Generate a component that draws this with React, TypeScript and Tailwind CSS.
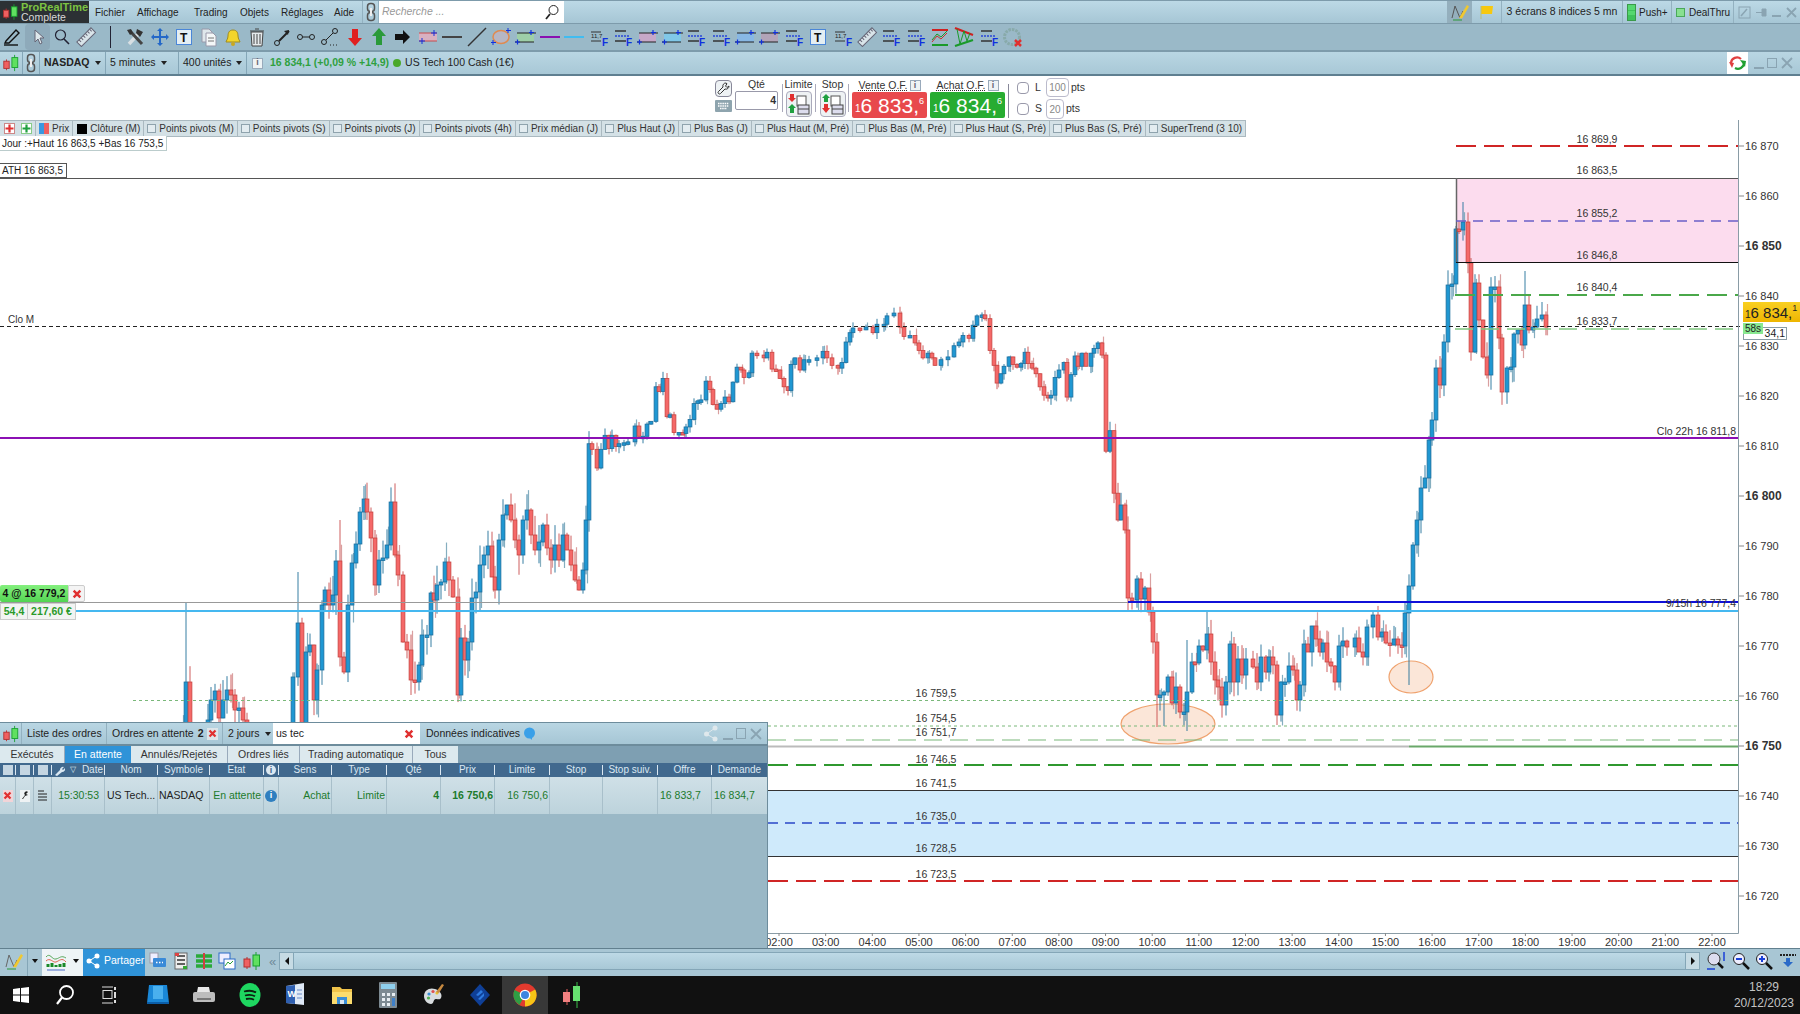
import React from "react";

type P = [number, number];
const early: P[] = [[182,735],[186,682],[190,745],[208,720],[211,700],[215,691],[219,718],[223,700],[227,690],[231,695],[235,710],[239,708],[243,720],[247,750],
[290,750],[293,677],[298,623],[302,750],[306,652],[310,645],[314,700],[317,670],[322,605],[325,590],[329,605],[333,595],[336,561],[340,657],[344,672],[348,605],[352,563],[356,544],[360,512],[364,499],[367,512],[371,538],[375,585],[379,560],[383,558],[387,545],[391,502],[395,555],[398,575],[403,642],[407,650],[411,680],[415,682],[419,665],[422,635],[427,635],[431,593],[434,600],[437,585],[441,582],[445,562],[449,580],[453,597],[458,695],[461,638],[465,660],[468,642],[472,598],[476,592],[480,565],[484,555],[488,546],[492,577],[495,590],[499,540],[503,515],[507,505],[511,520],[515,540],[519,555],[523,520],[527,510],[531,535],[535,550],[539,542],[543,525],[547,548],[551,560],[555,545],[559,560],[563,535],[567,550],[571,565],[575,580],[579,590],[583,570],[586,520]];
const midRaw: P[] = [[589,454],[592,460],[597,480],[601,460],[605,445],[609,459],[612,445],[616,457],[619,454],[624,453],[628,452],[635,435],[639,446],[643,446],[647,433],[651,430],[656,393],[659,398],[663,384],[667,425],[670,423],[674,442],[679,442],[683,443],[686,436],[690,428],[694,411],[698,408],[701,407],[706,387],[710,396],[713,412],[717,417],[721,411],[725,404],[729,409],[733,388],[737,372],[741,375],[744,383],[749,378],[752,357],[757,359],[764,362],[767,356],[772,374],[776,375],[780,384],[784,393],[788,397],[791,369],[795,362],[800,375],[804,364],[809,364],[817,362],[823,355],[827,362],[832,370],[838,373],[842,367],[846,345],[850,335],[853,330],[860,332],[866,329],[873,335],[877,326],[884,326],[887,317],[894,314],[900,329],[904,339],[910,338],[915,346],[919,354],[923,362],[928,357],[932,362],[935,370],[941,364],[948,361],[954,349],[959,345],[963,338],[969,341],[973,327],[977,317],[982,316],[985,320],[990,354],[994,370],[997,389],[1001,379],[1004,371],[1009,361],[1013,369],[1017,372],[1021,368],[1025,356],[1028,368],[1032,373],[1036,379],[1040,393],[1044,402],[1048,405],[1051,402],[1055,383],[1059,375],[1064,367],[1067,404],[1071,380],[1075,360],[1078,371],[1082,357],[1086,371],[1091,357],[1094,352],[1098,346],[1102,359],[1106,462],[1110,440],[1114,507]];
const late: P[] = [[1118,520],[1121,505],[1125,530],[1128,598],[1132,600],[1137,579],[1141,599],[1145,588],[1149,612],[1153,642],[1157,695],[1160,695],[1164,692],[1168,677],[1172,703],[1176,687],[1180,712],[1184,712],[1187,692],[1192,662],[1195,663],[1199,646],[1203,650],[1207,634],[1211,662],[1215,680],[1218,687],[1222,705],[1226,682],[1230,644],[1234,682],[1238,659],[1242,675],[1246,659],[1253,667],[1257,682],[1261,657],[1266,672],[1269,657],[1273,665],[1277,715],[1281,682],[1285,682],[1289,666],[1293,670],[1297,700],[1300,685],[1304,644],[1308,652],[1312,626],[1316,639],[1320,652],[1323,643],[1327,662],[1331,666],[1335,682],[1339,646],[1343,641],[1347,647],[1355,638],[1359,652],[1363,657],[1367,627],[1373,615],[1378,637],[1382,632],[1386,643],[1390,645],[1394,639],[1398,645],[1402,646],[1405,613],[1409,586],[1413,545],[1417,520],[1421,488],[1425,478],[1429,440],[1432,420],[1436,368],[1440,385],[1444,342],[1448,285],[1452,284],[1456,229],[1459,230],[1463,222],[1468,263],[1471,352],[1475,283],[1479,320],[1483,357],[1487,375],[1491,287],[1495,287],[1499,338],[1502,392],[1507,368],[1511,367],[1514,334],[1518,330],[1522,345],[1525,305],[1529,330],[1533,327],[1537,319],[1542,315],[1546,327]];
const pts: P[] = [...early, ...midRaw.map(([x, y]): P => [x, 300 + ((y - 300) * 2.8) / 3]), ...late];
const rnd = (i: number) => {
  const s = Math.sin(i * 12.9898 + 4.1) * 43758.5453;
  return s - Math.floor(s);
};
const tops: Record<number, number> = { 186: 602, 298: 572, 340: 520, 364: 486, 1463: 202, 1525: 271, 1187: 640, 1207: 612 };
const bots: Record<number, number> = { 1409: 685, 1157: 727, 1164: 726, 1187: 731, 1277: 725, 306: 760 };
const candles = pts.map(([x, c], i) => {
  const pv = pts[i - 1];
  const o = !pv || x - pv[0] > 10 ? c + 30 : pv[1];
  const up = c <= o;
  const top = Math.min(o, c);
  const bot = Math.max(Math.max(o, c), top + 2.5);
  const amp = x < 590 ? 20 : x < 1110 ? 7 : 15;
  return { x, up, top, bot, wt: tops[x] ?? top - rnd(i) * amp, wb: bots[x] ?? bot + rnd(i + 99) * amp, ghost: i % 3 === 0, gt: top - rnd(i + 7) * amp, gb: bot + rnd(i + 31) * amp * 0.9 };
});

const py = (p: number) => 146 + (16870 - p) * 5;
const ticks = [16870, 16860, 16850, 16840, 16830, 16820, 16810, 16800, 16790, 16780, 16770, 16760, 16750, 16740, 16730, 16720];
const hours = Array.from({ length: 21 }, (_, i) => i + 2);
const levels: [string, number][] = [["16 869,9", 139], ["16 863,5", 170.5], ["16 855,2", 213.5], ["16 846,8", 255], ["16 840,4", 287.5], ["16 833,7", 321.5], ["16 759,5", 693], ["16 754,5", 718.5], ["16 751,7", 732], ["16 746,5", 759], ["16 741,5", 783], ["16 735,0", 816], ["16 728,5", 848], ["16 723,5", 874]];

const Ic = ({ children, w = 22, h = 20 }: { children: React.ReactNode; w?: number; h?: number }) => (
  <svg width={w} height={h} viewBox={`0 0 ${w} ${h}`} className="shrink-0">{children}</svg>
);
const Fl = () => (
  <Ic>
    <path d="M3 4h11M3 14h11" stroke="#333" strokeWidth="1.3" />
    <path d="M3 9h14" stroke="#2a47d8" strokeDasharray="2 1" strokeWidth="1.3" />
    <text x="14" y="19" fontSize="10" fontWeight="700" fill="#1030e0">F</text>
  </Ic>
);
const Rc = ({ c }: { c: string }) => (
  <Ic>
    <rect x="3" y="6" width="17" height="9" fill={c} />
    <path d="M3 6h19M1 15h19" stroke="#222" />
    <path d="M17 3v5M15 5.500h5M1 15h5M3.500 12.500v5" stroke="#1030e0" strokeWidth="1.200" />
  </Ic>
);
const Sm = () => (
  <Ic>
    <path d="M3 5h10M3 14h10" stroke="#333" />
    <text x="3" y="11" fontSize="6" fill="#222">11,7</text>
    <text x="14" y="19" fontSize="10" fontWeight="700" fill="#1030e0">F</text>
  </Ic>
);
const Ruler = () => (
  <Ic>
    <g transform="rotate(-45 11 10)">
      <rect x="1" y="7" width="20" height="6.500" fill="#d9e4e9" stroke="#667" />
      <path d="M4 7v3M7 7v3M10 7v3M13 7v3M16 7v3M19 7v3" stroke="#667" />
    </g>
  </Ic>
);
const Tb = () => (
  <Ic>
    <rect x="3.500" y="2.500" width="15" height="15" fill="#e4eef3" stroke="#4a86d8" />
    <text x="7" y="14.500" fontSize="12" fontWeight="700" fill="#111">T</text>
  </Ic>
);
const LineI = ({ c }: { c: string }) => (
  <Ic>
    <path d="M1 10h20" stroke={c} strokeWidth="2" />
  </Ic>
);
const tools: React.ReactNode[] = [
  <Ic key="a"><path d="M5 17 15 6" stroke="#d8dfe3" strokeWidth="3.500" /><path d="M6 4l12 13" stroke="#444" strokeWidth="3" /><path d="M13 2l6 3-3 5-4-4zM3 3l4-1 2 4-3 2z" fill="#333" /></Ic>,
  <Ic key="b"><path d="M11 2v16M3 10h16" stroke="#2468c8" strokeWidth="2" /><path d="M11 1l-3 3h6zM11 19l-3-3h6zM2 10l3-3v6zM20 10l-3-3v6z" fill="#2468c8" /></Ic>,
  <Tb key="c" />,
  <Ic key="d"><path d="M5 2h7l3 3v10H5z" fill="#dfe7eb" stroke="#99a" /><path d="M9 6h7l3 3v10H9z" fill="#f4f7f8" stroke="#99a" /><path d="M11 11h6M11 14h6" stroke="#777" /></Ic>,
  <Ic key="e"><path d="M11 3c-4 0-5 3-5 6 0 3-2 5-2 6h14c0-1-2-3-2-6 0-3-1-6-5-6z" fill="#f2d52c" stroke="#a08c20" /><circle cx="11" cy="17" r="2" fill="#c9a820" /></Ic>,
  <Ic key="f"><path d="M5 5h12l-1 14H6z" fill="#e6eaec" stroke="#444" /><path d="M4 4h14M9 2h4M8 7v10M11 7v10M14 7v10" stroke="#444" /></Ic>,
  <Ic key="g"><circle cx="6" cy="16" r="2.500" fill="none" stroke="#222" /><path d="M8 14 18 4" stroke="#222" strokeWidth="2" /><path d="M18 3l-5 1 4 4z" fill="#222" /></Ic>,
  <Ic key="h"><circle cx="5" cy="10" r="2.500" fill="none" stroke="#222" /><circle cx="17" cy="10" r="2.500" fill="none" stroke="#222" /><path d="M7.500 10h7" stroke="#222" /></Ic>,
  <Ic key="i"><circle cx="5" cy="15" r="2.500" fill="none" stroke="#222" /><circle cx="16" cy="4" r="2.500" fill="none" stroke="#222" /><path d="M7 13 14 6" stroke="#222" /><path d="M11 18h1M14 18h1M17 18h1" stroke="#222" /></Ic>,
  <Ic key="j"><path d="M8 2h6v9h4l-7 8-7-8h4z" fill="#e02020" /></Ic>,
  <Ic key="k"><path d="M11 1l7 8h-4v9H8V9H4z" fill="#2a9a3a" /></Ic>,
  <Ic key="l"><path d="M3 7h8V3l7 7-7 7v-4H3z" fill="#111" /></Ic>,
  <Ic key="m"><rect x="2" y="6" width="18" height="8" fill="#d8b0c0" /><path d="M2 6h18M2 14h18" stroke="#c84a4a" /><path d="M17 3v6M14 6h6M5 11v6M2 14h6" stroke="#1030e0" /></Ic>,
  <LineI key="n" c="#444" />,
  <Ic key="o"><path d="M2 19 20 1" stroke="#333" strokeWidth="1.500" /></Ic>,
  <Ic key="p"><ellipse cx="11" cy="10" rx="8" ry="6.500" fill="#b6b6c4" stroke="#e08a50" strokeWidth="1.500" /><path d="M18 1v5M16 3.500h5M3 13v5M1 15.500h5" stroke="#1030e0" /></Ic>,
  <Rc key="q" c="#9ecfa8" />,
  <LineI key="r" c="#8a10b0" />,
  <LineI key="s" c="#40bcf0" />,
  <Sm key="t" />,
  <Fl key="u" />,
  <Rc key="v" c="#c6a8c8" />,
  <Rc key="w" c="#80c8e8" />,
  <Fl key="x" />,
  <Fl key="y" />,
  <Rc key="z" c="#88b8e4" />,
  <Rc key="aa" c="#b2a4b8" />,
  <Fl key="ab" />,
  <Tb key="ac" />,
  <Sm key="ad" />,
  <Ruler key="ae" />,
  <Fl key="af" />,
  <Fl key="ag" />,
  <Ic key="ah"><path d="M3 3h16" stroke="#d02020" strokeWidth="2" /><path d="M3 18h16" stroke="#1a9a2a" strokeWidth="2" /><path d="M3 15l5-6 4 3 6-6" stroke="#c83030" fill="none" /><path d="M3 13l5-6 4 3 6-6" stroke="#1a9a2a" fill="none" /></Ic>,
  <Ic key="ai" h={22}><path d="M2 2l18 7" stroke="#d02020" strokeWidth="2.200" /><path d="M2 20l18-6" stroke="#1a9a2a" strokeWidth="2.200" /><path d="M4 3l3 15 4-13 3 10 3-8" stroke="#1a9a2a" fill="none" /></Ic>,
  <Fl key="aj" />,
  <Ic key="ak"><circle cx="10" cy="10" r="7.500" fill="none" stroke="#8aa" strokeWidth="3" strokeDasharray="2.500 1" /><path d="M13 13l6 6M19 13l-6 6" stroke="#e03030" strokeWidth="2.500" /></Ic>,
];

const Candle = ({ w = 22, h = 20 }: { w?: number; h?: number }) => (
  <svg width={w} height={h} viewBox="0 0 22 20" className="shrink-0">
    <path d="M6 6v12" stroke="#c03030" /><rect x="3" y="8" width="6" height="8" fill="#f06060" stroke="#b03030" />
    <path d="M15 1v18" stroke="#18a030" /><rect x="12" y="4" width="6.500" height="11" fill="#60e060" stroke="#18a030" />
  </svg>
);
const Link = () => (
  <svg width="12" height="20" viewBox="0 0 12 20" className="shrink-0">
    <rect x="2.500" y="1.500" width="7" height="8" rx="3" fill="none" stroke="#555" strokeWidth="1.500" />
    <rect x="2.500" y="10.500" width="7" height="8" rx="3" fill="none" stroke="#555" strokeWidth="1.500" />
    <path d="M6 6v8" stroke="#eee" strokeWidth="2" />
  </svg>
);
const Caret = () => <span className="ml-[5px] h-0 w-0 shrink-0 border-x-[3.500px] border-t-[4px] border-x-transparent border-t-[#222]" />;
const Vs = () => <span className="h-full w-px shrink-0 bg-[#84a6b7]" />;
const X = ({ s = 12, c = "#e03030" }: { s?: number; c?: string }) => (
  <svg width={s} height={s} viewBox="0 0 12 12" className="shrink-0"><path d="M2 2l8 8M10 2l-8 8" stroke={c} strokeWidth="3" /></svg>
);
const WinCtl = ({ mid }: { mid: React.ReactNode }) => (
  <div className="flex items-center gap-[3px] text-[#7d98a6]">
    <span className="mt-[10px] h-[2px] w-[10px] bg-[#8aa4b2]" />
    {mid}
    <svg width="14" height="14" viewBox="0 0 14 14"><path d="M2 2l10 10M12 2 2 12" stroke="#8aa4b2" strokeWidth="1.800" /></svg>
  </div>
);

const inds: string[] = ["Points pivots (M)", "Points pivots (S)", "Points pivots (J)", "Points pivots (4h)", "Prix médian (J)", "Plus Haut (J)", "Plus Bas (J)", "Plus Haut (M, Pré)", "Plus Bas (M, Pré)", "Plus Haut (S, Pré)", "Plus Bas (S, Pré)", "SuperTrend (3 10)"];
const heads = ["Nom", "Symbole", "Etat"];

const Big = ({ v, bg }: { v: string; bg: string }) => (
  <div className={`flex h-[26px] w-[75px] items-center justify-center whitespace-nowrap rounded-[2px] text-white ${bg}`}>
    <span className="mt-[8px] text-[10px] leading-none">1</span>
    <span className="text-[21px] leading-none">{v}</span>
    <span className="mb-[8px] text-[9px] leading-none">6</span>
  </div>
);
const Info = () => (
  <span className="flex h-[11px] w-[11px] shrink-0 items-center justify-center border border-[#9ab] bg-[#eef3f5] text-[9px] font-bold text-[#667]">i</span>
);

export default function App() {
  return (
    <div className="flex h-[1014px] w-[1800px] flex-col overflow-hidden bg-white font-['Liberation_Sans',sans-serif] text-[11px] text-[#222]">
      {/* Menu row */}
      <div className="flex h-[24px] shrink-0 items-stretch border-y border-[#7d9bab] bg-linear-to-b from-[#bcd9e6] to-[#a6c6d5]">
        <div className="flex w-[89px] shrink-0 items-center bg-[#2c3134] pl-[1px]">
          <Candle w={19} h={18} />
          <div className="ml-[1px] flex flex-col leading-[10.500px]">
            <span className="text-[11px] font-bold text-[#7cc342]">ProRealTime</span>
            <span className="text-[10.500px] text-[#d8d8d8]">Complete</span>
          </div>
        </div>
        <div className="flex w-[273px] shrink-0 items-center pl-[6px] text-[10px]">
          <span className="w-[42px]">Fichier</span>
          <span className="w-[57px]">Affichage</span>
          <span className="w-[46px]">Trading</span>
          <span className="w-[41px]">Objets</span>
          <span className="w-[53px]">Réglages</span>
          <span>Aide</span>
        </div>
        <div className="flex w-[17px] shrink-0 items-center justify-center border-x border-[#93b1c0]"><Link /></div>
        <div className="flex w-[185px] shrink-0 items-center justify-between bg-white pl-[3px] pr-[4px] text-[10.500px] italic text-[#999]">
          Recherche ...
          <svg width="16" height="16" viewBox="0 0 16 16"><circle cx="9.500" cy="6" r="4.500" fill="none" stroke="#222" /><path d="M6 10 2 15" stroke="#222" strokeWidth="1.800" /></svg>
        </div>
        <div className="flex-1" />
        <div className="flex w-[25px] items-center justify-center bg-[#94afbd]">
          <svg width="20" height="18" viewBox="0 0 20 18"><path d="M2 15 5 3l5 12 3-7" stroke="#555" fill="none" /><path d="M9 15 17 2l2 1.500-7 12z" fill="#f0c830" /><path d="M3 17h9" stroke="#2a9a3a" /></svg>
        </div>
        <div className="flex w-[30px] items-center justify-center border-r border-[#93b1c0]">
          <svg width="16" height="16" viewBox="0 0 16 16"><path d="M2 2h12l-1 8H2z" fill="#f6c80e" /><path d="M2 2v13" stroke="#b9c07a" /></svg>
        </div>
        <div className="flex w-[121px] items-center justify-center border-r border-[#93b1c0] text-[10.500px]">3 écrans 8 indices 5 mn</div>
        <div className="flex w-[49px] items-center gap-[3px] border-r border-[#93b1c0] pl-[4px] text-[10px]">
          <span className="flex h-[17px] w-[9px] shrink-0 flex-col gap-px border border-[#3a9a4a] bg-[#3fc25c]"><span className="h-[5px] bg-[#55d870]" /><span className="h-[4px] bg-[#55d870]" /></span>Push+
        </div>
        <div className="flex w-[62px] items-center gap-[4px] border-r border-[#93b1c0] pl-[4px] text-[10px]">
          <span className="h-[9px] w-[9px] shrink-0 border border-[#4aa85a] bg-[#88e090]" />DealThru
        </div>
        <div className="flex w-[66px] items-center justify-around pl-[2px]">
          <svg width="13" height="13" viewBox="0 0 13 13"><rect x="1" y="1" width="11" height="11" fill="none" stroke="#8aa4b2" /><path d="M3 10l6-7" stroke="#8aa4b2" strokeWidth="1.500" /></svg>
          <svg width="13" height="13" viewBox="0 0 13 13"><path d="M1 6.500h6M7 3v7h4V3z" stroke="#8aa4b2" fill="#8aa4b2" /></svg>
          <span className="mt-[8px] h-[2px] w-[9px] bg-[#8aa4b2]" />
          <svg width="13" height="13" viewBox="0 0 13 13"><path d="M2 2l9 9M11 2l-9 9" stroke="#8aa4b2" strokeWidth="1.800" /></svg>
        </div>
      </div>
      {/* Tools row */}
      <div className="flex h-[28px] shrink-0 items-center border-b-2 border-[#7d9bab] bg-[#9ab9c8]">
        <div className="flex w-[25px] shrink-0 justify-center">
          <svg width="20" height="20" viewBox="0 0 20 20"><path d="M3 14 13 3l3 3L6 16H2z" fill="none" stroke="#111" strokeWidth="1.400" /><path d="M1 18h14" stroke="#111" strokeWidth="1.400" /></svg>
        </div>
        <div className="flex h-[26px] w-[25px] shrink-0 items-center justify-center rounded-sm bg-[#8eaaba]">
          <svg width="14" height="18" viewBox="0 0 14 18"><path d="M4 2v12l3-3 2 5 2-1-2-5h4z" fill="#dfe8ec" stroke="#667" /></svg>
        </div>
        <div className="flex w-[24px] shrink-0 justify-center">
          <svg width="18" height="18" viewBox="0 0 18 18"><circle cx="7.500" cy="7" r="5" fill="none" stroke="#223" strokeWidth="1.200" /><path d="M11 11l5 5" stroke="#223" strokeWidth="1.600" /></svg>
        </div>
        <div className="flex w-[24px] shrink-0 justify-center"><Ruler /></div>
        <div className="flex w-[25px] shrink-0 justify-center"><span className="h-[22px] w-px bg-[#223]" /></div>
        {tools.map((t, i) => (
          <div key={i} className="flex w-[24.400px] shrink-0 justify-center">{t}</div>
        ))}
      </div>
      {/* Instrument row */}
      <div className="flex h-[24px] shrink-0 items-stretch border-b-2 border-[#5f7f90] bg-linear-to-b from-[#b9d6e3] to-[#a8c8d6]">
        <div className="flex w-[22px] items-center justify-center"><Candle w={20} h={18} /></div>
        <Vs />
        <div className="flex w-[16px] items-center justify-center"><Link /></div>
        <Vs />
        <div className="flex w-[65px] items-center pl-[4px] text-[10.500px] font-bold">NASDAQ<Caret /></div>
        <Vs />
        <div className="flex w-[72px] items-center pl-[4px] text-[10.500px] font-medium">5 minutes<Caret /></div>
        <Vs />
        <div className="flex w-[67px] items-center pl-[4px] text-[10.500px]">400 unités<Caret /></div>
        <Vs />
        <div className="flex items-center pl-[5px] text-[10.500px]">
          <Info />
          <span className="ml-[7px] font-bold text-[#2fa03f]">16 834,1 (+0,09 % +14,9)</span>
          <span className="ml-[4px] h-[8px] w-[8px] rounded-full bg-[#4aa82a]" />
          <span className="ml-[4px]">US Tech 100 Cash (1€)</span>
        </div>
        <div className="flex-1" />
        <div className="flex w-[21px] items-center justify-center bg-white">
          <svg width="18" height="18" viewBox="0 0 18 18"><path d="M2 9a6 6 0 0 1 10-4" fill="none" stroke="#e04040" strokeWidth="2.200" /><path d="M0 8l5 1-2 5z" fill="#e04040" /><path d="M15 9a6 6 0 0 1-9 5" fill="none" stroke="#20a030" strokeWidth="2.200" /><path d="M11 6l6 1-1 6z" fill="#20a030" /></svg>
        </div>
        <div className="flex w-[52px] items-center justify-center">
          <WinCtl mid={<span className="h-[10px] w-[10px] border border-[#8aa4b2]" />} />
        </div>
      </div>
      {/* Order ticket */}
      <div className="flex h-[44px] shrink-0 items-start bg-white pl-[715px] pt-[2px] text-[10.500px] text-[#333]">
        <div className="mt-[2px] flex w-[17px] flex-col gap-[3px]">
          <span className="flex h-[17px] w-[17px] items-center justify-center rounded-sm border border-[#889] bg-[#eef2f4]">
            <svg width="13" height="13" viewBox="0 0 13 13"><path d="M9 1a3 3 0 0 0-3 4L1.500 9.500a1.400 1.400 0 0 0 2 2L8 7a3 3 0 0 0 4-3l-2 1.500L8.500 4 10 1.800z" fill="none" stroke="#333" /></svg>
          </span>
          <span className="flex h-[12px] w-[17px] items-center justify-center rounded-[1px] bg-[#8ea4ae]">
            <svg width="13" height="8" viewBox="0 0 13 8"><path d="M1 1.500h11M1 4h11M3 6.500h7" stroke="#fff" strokeWidth="1.400" strokeDasharray="1.500 .7" /></svg>
          </span>
        </div>
        <div className="ml-[3px] flex w-[43px] flex-col items-center">
          <span className="h-[13px] leading-[12px]">Qté</span>
          <span className="flex h-[19px] w-full items-center justify-end rounded-[2px] border border-[#99a] pr-[1px] text-[10.500px] font-bold">4</span>
        </div>
        <span className="ml-[4px] mt-[6px] h-[28px] w-px bg-[#aab]" />
        <div className="ml-[2px] flex w-[27px] flex-col items-center">
          <span className="h-[13px] leading-[12px]">Limite</span>
          <span className="flex h-[26px] w-[26px] items-center justify-center rounded-sm border border-[#aab] bg-[#eef2f4]">
            <svg width="22" height="22" viewBox="0 0 22 22"><path d="M2 1h4v4h2l-4 4-4-4h2z" fill="#e03030" /><path d="M4 11l4 4H6v5H2v-5H0z" fill="#20a040" /><rect x="9" y="3" width="9" height="10" fill="#fff" stroke="#555" /><rect x="10" y="12" width="11" height="9" fill="#dde" stroke="#444" /><path d="M10 16h11" stroke="#444" /></svg>
          </span>
        </div>
        <span className="ml-[3px] mt-[6px] h-[28px] w-px bg-[#aab]" />
        <div className="ml-[3px] flex w-[27px] flex-col items-center">
          <span className="h-[13px] leading-[12px]">Stop</span>
          <span className="flex h-[26px] w-[26px] items-center justify-center rounded-sm border border-[#aab] bg-[#eef2f4]">
            <svg width="22" height="22" viewBox="0 0 22 22"><path d="M4 1l4 4H6v4H2V5H0z" fill="#20a040" /><path d="M2 11h4v4h2l-4 5-4-5h2z" fill="#e03030" /><rect x="9" y="3" width="9" height="10" fill="#fff" stroke="#555" /><rect x="10" y="12" width="11" height="9" fill="#dde" stroke="#444" /><path d="M10 16h11" stroke="#444" /></svg>
          </span>
        </div>
        <span className="ml-[2px] mt-[6px] h-[28px] w-px bg-[#aab]" />
        <div className="ml-[3px] flex w-[75px] flex-col">
          <div className="flex h-[14px] items-center justify-center gap-[2px] leading-[12px]"><span className="underline decoration-dotted">Vente O.F.</span><Info /></div>
          <Big v="6 833," bg="bg-[#e8494c]" />
        </div>
        <div className="ml-[3px] flex w-[75px] flex-col">
          <div className="flex h-[14px] items-center justify-center gap-[2px] leading-[12px]"><span className="underline decoration-dotted">Achat O.F.</span><Info /></div>
          <Big v="6 834," bg="bg-[#27ac31]" />
        </div>
        <span className="ml-[3px] mt-[6px] h-[34px] w-px bg-[#889]" />
        <div className="ml-[8px] flex flex-col gap-[2px]">
          <div className="flex h-[19px] items-center">
            <span className="h-[12px] w-[12px] rounded-sm border border-[#99a]" />
            <span className="ml-[6px] w-[9px]">L</span>
            <span className="ml-[2px] flex h-[19px] w-[23px] items-center justify-center rounded-sm border border-[#bbc] text-[10px] text-[#888]">100</span>
            <span className="ml-[2px]">pts</span>
          </div>
          <div className="flex h-[20px] items-center">
            <span className="h-[12px] w-[12px] rounded-sm border border-[#99a]" />
            <span className="ml-[6px] w-[9px]">S</span>
            <span className="ml-[2px] flex h-[20px] w-[18px] items-center justify-center rounded-sm border border-[#bbc] text-[10px] text-[#888]">20</span>
            <span className="ml-[2px]">pts</span>
          </div>
        </div>
      </div>
      {/* Chart */}
      <div className="relative flex-1">
        <svg width="1800" height="828" viewBox="0 120 1800 828" className="absolute inset-0 bg-white" style={{ fontFamily: "'Liberation Sans',sans-serif" }}>
          <rect x="1456" y="178" width="282" height="85" fill="#fcdcee" />
          <rect x="768" y="791" width="970" height="65" fill="#cfeafb" />
          <ellipse cx="1168" cy="724" rx="47" ry="20" fill="#fbe6d8" stroke="#efa26e" strokeWidth="1.200" />
          <ellipse cx="1411" cy="677" rx="22" ry="16" fill="#fbe6d8" stroke="#efa26e" strokeWidth="1.200" />
          {candles.map((k, i) => (
            <g key={i}>
              {k.ghost && <path d={`M${k.x + 1.5} ${k.gt}V${k.gb}`} stroke={k.up ? "#85aebf" : "#d9a0a0"} strokeWidth="1.200" />}
              <path d={`M${k.x} ${k.wt}V${k.wb}`} stroke={k.up ? "#1f6f98" : "#c84c4c"} strokeWidth="0.900" />
              <rect x={k.x - 1.9} y={k.top} width="3.800" height={k.bot - k.top} fill={k.up ? "#1f97d2" : "#f56868"} stroke={k.up ? "#1b6f9f" : "#c84440"} strokeWidth="0.800" />
            </g>
          ))}
          <path d="M0 178.500H1738" stroke="#555" />
          <path d="M1456.500 178V263" stroke="#666" strokeWidth="1.500" />
          <path d="M1456 262.500H1738" stroke="#111" />
          <path d="M1456 146H1738" stroke="#d02525" strokeWidth="2" strokeDasharray="20 8" />
          <path d="M1456 221H1738" stroke="#6a5fc8" strokeWidth="1.500" strokeDasharray="10 7" />
          <path d="M1455 295H1738" stroke="#4aa84a" strokeWidth="2" strokeDasharray="20 8" />
          <path d="M0 326.500H1745" stroke="#222" strokeDasharray="4 3" />
          <path d="M1455 329H1738" stroke="#80c880" strokeWidth="1.500" strokeDasharray="18 8" />
          <path d="M0 438H1738" stroke="#8c10b4" strokeWidth="2" />
          <path d="M0 602.500H1128" stroke="#999" />
          <path d="M1128 602H1738" stroke="#1010d8" strokeWidth="2" />
          <path d="M76 611H1738" stroke="#45b8f0" strokeWidth="2" />
          <path d="M133 700.500H1738" stroke="#7ab87a" strokeDasharray="3 3" />
          <path d="M0 726H1738" stroke="#7ab87a" strokeDasharray="3 3" />
          <path d="M768 740H1738" stroke="#7ab87a" strokeWidth="1.200" strokeDasharray="18 8" />
          <path d="M768 746.500H1409" stroke="#bbb" strokeWidth="2" />
          <path d="M1409 746.500H1738" stroke="#6aa86a" strokeWidth="2" />
          <path d="M768 765H1738" stroke="#2f982f" strokeWidth="2" strokeDasharray="20 8" />
          <path d="M768 790.500H1738" stroke="#333" />
          <path d="M768 823H1738" stroke="#2a47c8" strokeWidth="1.500" strokeDasharray="10 7" />
          <path d="M768 856.500H1738" stroke="#333" />
          <path d="M768 881H1738" stroke="#d02525" strokeWidth="2" strokeDasharray="20 8" />
          <path d="M1738.500 120V933.500H768" stroke="#8a9ca6" fill="none" />
          {levels.map(([t, y]) => (
            <text key={t} x={t.startsWith("16 7") ? 936 : 1597} y={y + 3.5} textAnchor="middle" fontSize="10.500" fill="#333">{t}</text>
          ))}
          <text x="8" y="323" fontSize="10" fill="#333">Clo M</text>
          <text x="1736" y="435" textAnchor="end" fontSize="10.500" fill="#333">Clo 22h 16 811,8</text>
          <text x="1736" y="607" textAnchor="end" fontSize="10.500" fill="#333">9/15h 16 777,4</text>
          {ticks.map((p) => {
            const maj = p % 50 === 0;
            return (
              <g key={p}>
                <path d={`M1739 ${py(p)}h5`} stroke="#888" />
                <text x="1745" y={py(p) + 4} fontSize={maj ? 12 : 11} fontWeight={maj ? 700 : 400} fill="#333">{`${String(p).slice(0, 2)} ${String(p).slice(2)}`}</text>
              </g>
            );
          })}
          {hours.map((h) => {
            const x = 779 + (h - 2) * 46.65;
            return (
              <g key={h}>
                <path d={`M${x} 933v3`} stroke="#888" />
                <text x={x} y="946" textAnchor="middle" fontSize="11" fill="#333">{`${String(h).padStart(2, "0")}:00`}</text>
              </g>
            );
          })}
        </svg>
        {/* indicators */}
        <div className="absolute left-0 top-0 flex h-[17px] items-stretch whitespace-nowrap border-y border-[#aab9c0] bg-[#d4e1e6] text-[10px] leading-[15px] text-[#333]">
          <span className="flex w-[18px] items-center justify-center"><svg width="11" height="11" viewBox="0 0 11 11"><rect x="0.500" y="0.500" width="10" height="10" fill="#fff" stroke="#c88" /><path d="M5.500 1.500v8M1.500 5.500h8" stroke="#e03030" strokeWidth="2.200" /></svg></span>
          <span className="flex w-[18px] items-center justify-center border-r border-[#aab9c0]"><svg width="11" height="11" viewBox="0 0 11 11"><rect x="0.500" y="0.500" width="10" height="10" fill="#fff" stroke="#8c8" /><path d="M5.500 1.500v8M1.500 5.500h8" stroke="#20a040" strokeWidth="2.200" /></svg></span>
          <span className="flex items-center gap-[3px] border-r border-[#aab9c0] px-[3px]"><span className="h-[11px] w-[10px] bg-linear-to-r from-[#3a98e0] from-50% to-[#f06060] to-50%" />Prix</span>
          <span className="flex items-center gap-[3px] border-r border-[#aab9c0] pl-[4px] pr-[3px]"><span className="h-[10px] w-[10px] bg-black" />Clôture (M)</span>
          {inds.map((t) => (
            <span key={t} className="flex items-center gap-[3px] border-r border-[#aab9c0] px-[3px]"><span className="h-[9px] w-[9px] shrink-0 border border-[#8fa3ad] bg-[#e3ecf0]" />{t}</span>
          ))}
        </div>
        <div className="absolute left-0 top-[16px] flex h-[15px] w-[167px] items-center whitespace-nowrap border-b border-r border-[#bcc] bg-white pl-[2px] text-[10px] text-[#222]">Jour :+Haut 16 863,5 +Bas 16 753,5</div>
        <div className="absolute left-0 top-[43px] flex h-[15px] w-[67px] items-center whitespace-nowrap border border-l-0 border-[#555] bg-white pl-[2px] text-[10px]">ATH 16 863,5</div>
        {/* order tag */}
        <div className="absolute left-0 top-[465px] flex h-[17px]">
          <div className="flex w-[68px] items-center justify-center rounded-l-[2px] bg-linear-to-b from-[#84f07e] to-[#52d452] text-[10.500px] font-bold text-[#111]">4 @ 16 779,2</div>
          <div className="flex w-[17px] items-center justify-center rounded-r-[2px] border border-[#ccc] bg-[#f4f4f4]"><X s={10} /></div>
        </div>
        <div className="absolute left-0 top-[483px] flex h-[17px] border border-[#ccc] bg-[#f2f4f2] text-[10.500px] font-bold text-[#2a9a2a]">
          <span className="flex w-[27px] items-center justify-center border-r border-[#ccc]">54,4</span>
          <span className="flex w-[47px] items-center justify-center">217,60 €</span>
        </div>
        {/* price boxes */}
        <div className="absolute left-[1743px] top-[207px] flex h-[13px] w-[44px] items-center justify-end border border-[#8a9ca6] bg-white pr-[1px] text-[10.500px]">34,1</div>
        <div className="absolute left-[1743px] top-[182px] flex h-[20px] w-[57px] items-center whitespace-nowrap bg-linear-to-b from-[#f9d020] to-[#eeb500] pl-[2px] text-[#222]">
          <span className="mt-[4px] text-[10px]">1</span><span className="text-[15px] leading-none">6 834,</span><span className="mb-[6px] text-[9px]">1</span>
        </div>
        <div className="absolute left-[1743px] top-[203px] flex h-[11px] w-[20px] items-center justify-center bg-[#88e890] text-[10px] text-[#222]">58s</div>
        {/* Orders window */}
        <div className="absolute bottom-0 left-0 top-[602px] flex w-[768px] flex-col border-r border-t border-[#6d8c9c] bg-[#9ab8c6]">
          <div className="flex h-[23px] shrink-0 items-stretch border-b-2 border-[#6d8c9c] bg-linear-to-b from-[#b9d6e3] to-[#a6c6d5] text-[10.500px]">
            <span className="flex w-[22px] items-center justify-center border-r border-[#93b1c0]"><Candle w={20} h={18} /></span>
            <span className="flex w-[85px] items-center border-r border-[#93b1c0] pl-[5px]">Liste des ordres</span>
            <span className="flex w-[116px] items-center border-r border-[#93b1c0] pl-[5px]">Ordres en attente <b className="ml-[4px]">2</b><span className="ml-[3px] flex h-[12px] w-[11px] items-center justify-center bg-[#dde5e9]"><X s={9} /></span></span>
            <span className="flex w-[50px] items-center pl-[5px]">2 jours<Caret /></span>
            <span className="flex w-[147px] items-center justify-between bg-white pl-[3px] pr-[6px]">us tec<X s={10} /></span>
            <span className="flex items-center pl-[6px]">Données indicatives
              <svg width="13" height="13" viewBox="0 0 13 13" className="ml-[3px]"><circle cx="6.500" cy="6" r="5.500" fill="#3aa0e8" /><path d="M7 11l2 2 0-3z" fill="#3aa0e8" /></svg>
            </span>
            <span className="flex-1" />
            <span className="flex items-center pr-[4px]">
              <svg width="18" height="18" viewBox="0 0 18 18" className="mr-[2px]"><circle cx="3.500" cy="9" r="2.500" fill="#dfe8ec" /><circle cx="12" cy="3" r="2.500" fill="#dfe8ec" /><circle cx="12" cy="14" r="2.500" fill="#dfe8ec" /><path d="M3.500 9 12 3M3.500 9 12 14" stroke="#dfe8ec" /></svg>
              <WinCtl mid={<span className="h-[11px] w-[10px] border border-[#8aa4b2]" />} />
            </span>
          </div>
          <div className="flex h-[17px] shrink-0 items-stretch bg-[#7e9fb2] text-[10.500px] leading-[17px] text-[#333]">
            <span className="w-[65px] border-r border-[#9ab] bg-[#dce9ee] text-center">Exécutés</span>
            <span className="w-[66px] bg-[#2f93d8] text-center text-white">En attente</span>
            <span className="w-[97px] border-r border-[#9ab] bg-[#dce9ee] text-center">Annulés/Rejetés</span>
            <span className="w-[72px] border-r border-[#9ab] bg-[#dce9ee] text-center">Ordres liés</span>
            <span className="w-[113px] border-r border-[#9ab] bg-[#dce9ee] text-center">Trading automatique</span>
            <span className="w-[45px] bg-[#dce9ee] text-center">Tous</span>
          </div>
          <div className="grid h-[14px] shrink-0 grid-cols-[16px_18px_18px_53px_53px_52px_54px_15px_53px_55px_54px_54px_55px_53px_55px_54px_55px] items-center bg-[#41698e] text-[10px] text-[#dbe8f2]">
            {[0, 1, 2].map((i) => (
              <span key={i} className="flex h-[10px] justify-center border-r border-[#dbe8f2]"><span className="h-[10px] w-[10px] bg-[#c5d6e2]" /></span>
            ))}
            <span className="flex h-[10px] items-center justify-between border-r border-[#dbe8f2] pl-[2px] pr-[1px] leading-none">
              <svg width="11" height="11" viewBox="0 0 11 11"><path d="M1 10l5-5a3 3 0 0 1 4-3L8 4l1 1 2-2a3 3 0 0 1-3 4l-5 4z" fill="#dbe8f2" /></svg>
              <span className="text-[8px]">▽</span>Date
            </span>
            {heads.map((h) => <span key={h} className="h-[10px] border-r border-[#dbe8f2] text-center leading-[10px]">{h}</span>)}
            <span className="flex h-[10px] justify-center border-r border-[#dbe8f2]"><span className="h-[10px] w-[10px] rounded-full bg-[#dbe8f2] text-center text-[9px] font-bold leading-[10px] text-[#41698e]">i</span></span>
            {["Sens", "Type", "Qté", "Prix", "Limite", "Stop", "Stop suiv.", "Offre"].map((h) => <span key={h} className="h-[10px] border-r border-[#dbe8f2] text-center leading-[10px]">{h}</span>)}
            <span className="h-[10px] text-center leading-[10px]">Demande</span>
          </div>
          <div className="grid h-[37px] shrink-0 grid-cols-[16px_18px_18px_53px_53px_52px_54px_15px_53px_55px_54px_54px_55px_53px_55px_54px_55px] items-stretch bg-linear-to-b from-[#cfe0e7] to-[#bdd3dc] text-[10.500px] leading-[37px] text-[#1c7a2c]">
            <span className="flex items-center justify-center border-r border-[#a8bfca]"><span className="flex h-[12px] w-[10px] items-center justify-center bg-[#f2d4d8]"><X s={9} /></span></span>
            <span className="flex items-center justify-center border-r border-[#a8bfca]"><span className="flex h-[12px] w-[10px] items-center justify-center bg-[#eef2f4]"><svg width="8" height="9" viewBox="0 0 8 9"><path d="M1 8l3-4a2 2 0 0 1 3-3L5 3l2 1-3 1-2 3z" fill="#222" /></svg></span></span>
            <span className="flex items-center justify-center border-r border-[#a8bfca]"><svg width="9" height="11" viewBox="0 0 9 11"><path d="M0 1h6M0 4h9M0 7h9M0 10h9" stroke="#222" /></svg></span>
            <span className="border-r border-[#a8bfca] pr-[5px] text-right">15:30:53</span>
            <span className="border-r border-[#a8bfca] pl-[2px] text-[#222]">US Tech...</span>
            <span className="border-r border-[#a8bfca] pl-[1px] text-[#222]">NASDAQ</span>
            <span className="border-r border-[#a8bfca] pr-[2px] text-right">En attente</span>
            <span className="flex items-center justify-center border-r border-[#a8bfca]"><span className="flex h-[12px] w-[12px] items-center justify-center rounded-full bg-[#2f7fc0] text-[9px] font-bold leading-none text-white">i</span></span>
            <span className="border-r border-[#a8bfca] pr-px text-right">Achat</span>
            <span className="border-r border-[#a8bfca] pr-px text-right">Limite</span>
            <span className="border-r border-[#a8bfca] pr-px text-right font-bold">4</span>
            <span className="border-r border-[#a8bfca] pr-px text-right font-bold">16 750,6</span>
            <span className="border-r border-[#a8bfca] pr-px text-right">16 750,6</span>
            <span className="border-r border-[#a8bfca]" />
            <span className="border-r border-[#a8bfca]" />
            <span className="border-r border-[#a8bfca] pl-[2px]">16 833,7</span>
            <span className="pl-[2px]">16 834,7</span>
          </div>
        </div>
      </div>
      {/* Bottom toolbar */}
      <div className="flex h-[28px] shrink-0 items-stretch border-t border-[#62808f] bg-[#a8c6d4]">
        <span className="flex w-[28px] items-center justify-center border-r border-[#84a6b7] pb-[3px]">
          <svg width="20" height="18" viewBox="0 0 20 18"><path d="M2 15 5 3l5 12 3-7" stroke="#666" fill="none" /><path d="M9 15 17 2l2 1.500-7 12z" fill="#f0c830" /><path d="M3 17h9" stroke="#2a9a3a" /></svg>
        </span>
        <span className="flex w-[14px] items-center justify-center pb-[3px]"><span className="h-0 w-0 border-x-[3.500px] border-t-[4px] border-x-transparent border-t-[#111]" /></span>
        <span className="flex w-[27px] items-center justify-center bg-[#eef4f6] pb-[3px]">
          <svg width="22" height="22" viewBox="0 0 22 22"><path d="M1 7c4-5 6 3 10 2s5-4 10-1" stroke="#5aa85a" fill="none" /><path d="M1 11c4-4 7 2 10 1s6-5 10 0" stroke="#e06050" fill="none" /><path d="M3 17v-3M7 17v-4M11 17v-2M15 17v-3M19 17v-4" stroke="#1a8a2a" strokeWidth="3" /><path d="M2 20h18" stroke="#4a6ac8" /></svg>
        </span>
        <span className="flex w-[14px] items-center justify-center bg-[#eef4f6] pb-[3px]"><span className="h-0 w-0 border-x-[3.500px] border-t-[4px] border-x-transparent border-t-[#111]" /></span>
        <span className="flex w-[62px] items-center gap-[4px] bg-[#2f93d8] pb-[3px] pl-[3px] text-[10.500px] text-white">
          <svg width="14" height="16" viewBox="0 0 14 16"><circle cx="3" cy="8" r="2.500" fill="#fff" /><circle cx="11" cy="3" r="2.500" fill="#fff" /><circle cx="11" cy="13" r="2.500" fill="#fff" /><path d="M3 8 11 3M3 8l8 5" stroke="#fff" /></svg>
          Partager
        </span>
        <div className="flex items-center gap-[5px] pb-[3px] pl-[4px]">
          <svg width="18" height="18" viewBox="0 0 18 18"><rect x="1" y="1" width="8" height="10" fill="#eef" stroke="#99a" /><rect x="4" y="6" width="13" height="9" rx="1" fill="#3a8ad8" /><path d="M7 10.500h7" stroke="#fff" strokeDasharray="1.500 1.500" strokeWidth="1.500" /></svg>
          <svg width="18" height="18" viewBox="0 0 18 18"><rect x="3" y="1" width="12" height="16" fill="#eee" stroke="#666" /><path d="M5 4h8M5 8h8M5 12h8" stroke="#333" strokeWidth="1.500" /><path d="M3 1h4v3H3z" fill="#d44" /><path d="M11 14h4v3h-4z" fill="#3a3" /></svg>
          <svg width="18" height="18" viewBox="0 0 18 18"><path d="M1 4h16M1 9h16M1 14h16" stroke="#2aaa3a" strokeWidth="3.500" /><path d="M9 1v16" stroke="#d04040" strokeWidth="2" /></svg>
          <svg width="18" height="18" viewBox="0 0 18 18"><rect x="1" y="1" width="11" height="10" fill="#eef" stroke="#2a6ac8" /><rect x="6" y="7" width="11" height="10" fill="#fff" stroke="#2a6ac8" /><path d="M7 14l3-4 2 2 3-3" stroke="#2aa03a" fill="none" /></svg>
          <Candle w={22} h={20} />
          <span className="ml-[1px] text-[13px] leading-none text-[#6f8a98]">«</span>
        </div>
        <div className="mb-[6px] ml-[3px] mt-[3px] flex flex-1 items-stretch border border-[#84a6b7] bg-linear-to-b from-[#bdd9e6] to-[#a8c8d6]">
          <span className="flex w-[14px] items-center justify-center border-r border-[#84a6b7] bg-[#c6dbe4]"><span className="h-0 w-0 border-y-[4px] border-r-[4px] border-y-transparent border-r-[#111]" /></span>
          <span className="flex-1" />
          <span className="flex w-[14px] items-center justify-center border-l border-[#84a6b7] bg-[#c6dbe4]"><span className="h-0 w-0 border-y-[4px] border-l-[4px] border-y-transparent border-l-[#111]" /></span>
        </div>
        <div className="flex w-[100px] items-center justify-around pb-[3px] pl-[3px]">
          <svg width="20" height="20" viewBox="0 0 20 20"><circle cx="8" cy="8" r="6" fill="#dde" stroke="#333" /><path d="M12 12l5 5" stroke="#111" strokeWidth="2.500" /><path d="M18 1v9M1 18h8" stroke="#1a40d8" strokeWidth="1.500" /></svg>
          <svg width="18" height="18" viewBox="0 0 18 18"><circle cx="7" cy="7" r="5.500" fill="#eef" stroke="#222" /><path d="M4 7h6" stroke="#1a40d8" strokeWidth="2" /><path d="M11 11l6 6" stroke="#111" strokeWidth="2.500" /></svg>
          <svg width="18" height="18" viewBox="0 0 18 18"><circle cx="7" cy="7" r="5.500" fill="#eef" stroke="#222" /><path d="M4 7h6M7 4v6" stroke="#1a40d8" strokeWidth="2" /><path d="M11 11l6 6" stroke="#111" strokeWidth="2.500" /></svg>
          <svg width="18" height="18" viewBox="0 0 18 18"><path d="M1 3h16" stroke="#222" strokeWidth="2" strokeDasharray="2 1" /><path d="M7 6h4v4h3l-5 5-5-5h3z" fill="#2a6ac8" /></svg>
        </div>
      </div>
      {/* Taskbar */}
      <div className="relative flex h-[38px] shrink-0 items-center bg-[#111]">
        <div className="flex w-[41px] justify-center"><svg width="16" height="16" viewBox="0 0 16 16"><path d="M0 2l7-1v6.500H0zM8 .9l8-.9v7.500H8zM0 8.500h7V15l-7-1zM8 8.500h8V16l-8-1z" fill="#fff" /></svg></div>
        <div className="flex w-[48px] justify-center"><svg width="20" height="22" viewBox="0 0 20 22"><circle cx="11.500" cy="8.500" r="6.500" fill="none" stroke="#fff" strokeWidth="1.800" /><path d="M7 13.500 2 20" stroke="#fff" strokeWidth="2.200" /></svg></div>
        <div className="flex w-[42px] justify-center"><svg width="16" height="18" viewBox="0 0 16 18"><path d="M0 1h11M0 17h11" stroke="#ddd" /><rect x="1" y="4.500" width="9" height="8" fill="none" stroke="#ddd" /><path d="M13 1v3M13 6v6M13 14v3" stroke="#ddd" strokeWidth="2" /></svg></div>
        <div className="ml-[3px] flex w-[48px] justify-center"><svg width="22" height="24" viewBox="0 0 22 24"><path d="M2 2h18l2 18H0z" fill="#1a88d8" /><rect x="6" y="3" width="10" height="13" fill="#4ab0ee" /><path d="M0 20h22" stroke="#0b5ea8" strokeWidth="2" /></svg></div>
        <div className="flex w-[44px] justify-center"><svg width="22" height="18" viewBox="0 0 22 18"><path d="M5 1h11l1 5H4z" fill="#e8e8e8" /><rect x="0" y="6" width="22" height="10" rx="2" fill="#bdbdbd" /><path d="M4 13h14" stroke="#777" strokeWidth="2" /></svg></div>
        <div className="flex w-[48px] justify-center"><svg width="22" height="24" viewBox="0 0 22 24"><ellipse cx="11" cy="12" rx="10.500" ry="12" fill="#1ed760" /><path d="M5 8.500c4-1 9-1 12 1M6 12.500c3-.8 7-.8 10 .8M7 16c2.500-.6 5.500-.6 8 .7" stroke="#0c2010" strokeWidth="1.800" fill="none" /></svg></div>
        <div className="flex w-[44px] justify-center"><svg width="22" height="24" viewBox="0 0 22 24"><path d="M1 3 19 0v22L1 20z" fill="#dfe9f6" /><path d="M1 3 10 2v19l-9-1z" fill="#2f5fb0" /><path d="M12 7h5M12 11h5M12 15h5" stroke="#6a8ac8" /><text x="2.500" y="14" fontSize="9" fontWeight="700" fill="#fff">W</text></svg></div>
        <div className="flex w-[48px] justify-center"><svg width="22" height="20" viewBox="0 0 22 20"><path d="M1 2h8l2 2h10v15H1z" fill="#f0c34a" /><path d="M1 7h20v12H1z" fill="#fbdc6e" /><path d="M6 12h10v7H6z" fill="#3a8ed8" /><path d="M9 15h4v4H9z" fill="#d8e6f2" /></svg></div>
        <div className="flex w-[44px] justify-center"><svg width="18" height="26" viewBox="0 0 18 26"><rect width="18" height="26" rx="1" fill="#7d8a92" /><rect x="2" y="2" width="14" height="5" fill="#8fd0ee" /><path d="M3 11h3v3H3zM8 11h3v3H8zM13 11h3v3h-3zM3 16h3v3H3zM8 16h3v3H8zM3 21h3v3H3zM8 21h3v3H8z" fill="#e8eef2" /><path d="M13 16h3v8h-3z" fill="#3f80c8" /></svg></div>
        <div className="flex w-[48px] justify-center"><svg width="24" height="24" viewBox="0 0 24 24"><path d="M2 13C2 7 8 4 13 6c4 1 8 5 6 9-1 2-3 1-5 1-3 0-2 5-5 5-4 0-7-4-7-8z" fill="#d8dcdf" /><circle cx="7" cy="11" r="1.600" fill="#3a8ed8" /><circle cx="11" cy="8.500" r="1.600" fill="#e05050" /><circle cx="6.500" cy="15" r="1.600" fill="#50b050" /><circle cx="15" cy="10" r="1.600" fill="#e8c030" /><path d="M14 9 20 1l2 1-5 8z" fill="#c88a40" /></svg></div>
        <div className="flex w-[44px] justify-center"><svg width="22" height="24" viewBox="0 0 22 24"><path d="M11 1l10 11-10 11L1 12z" fill="#0f3f96" /><path d="M7 12l5-5 2 2-5 4zM9 16l6-6v3l-4 4z" fill="#2d7ae0" /></svg></div>
        <div className="flex h-full w-[46px] items-center justify-center bg-[#383838]"><svg width="24" height="24" viewBox="0 0 24 24"><circle cx="12" cy="12" r="11.500" fill="#e23a2e" /><path d="M12 12 22.200 6.500A11.500 11.500 0 0 1 12 23.500z" fill="#f7c416" /><path d="M12 12l-5.500 10A11.500 11.500 0 0 1 1.500 7z" fill="#2f9e44" /><circle cx="12" cy="12" r="5.300" fill="#fff" /><circle cx="12" cy="12" r="4" fill="#3d85e0" /></svg></div>
        <div className="ml-[2px] flex w-[44px] justify-center"><svg width="20" height="26" viewBox="0 0 20 26"><path d="M5 7v16" stroke="#e05a5a" /><rect x="1" y="10" width="7" height="10" fill="#f28080" /><path d="M15 0v26" stroke="#3ac04a" /><rect x="11" y="4" width="7" height="15" fill="#66e070" /></svg></div>
        <div className="absolute right-[6px] top-[3px] flex flex-col items-end text-[12px] leading-[16px] text-[#c4c4c4]">
          <span className="mr-[15px]">18:29</span>
          <span>20/12/2023</span>
        </div>
      </div>
    </div>
  );
}
